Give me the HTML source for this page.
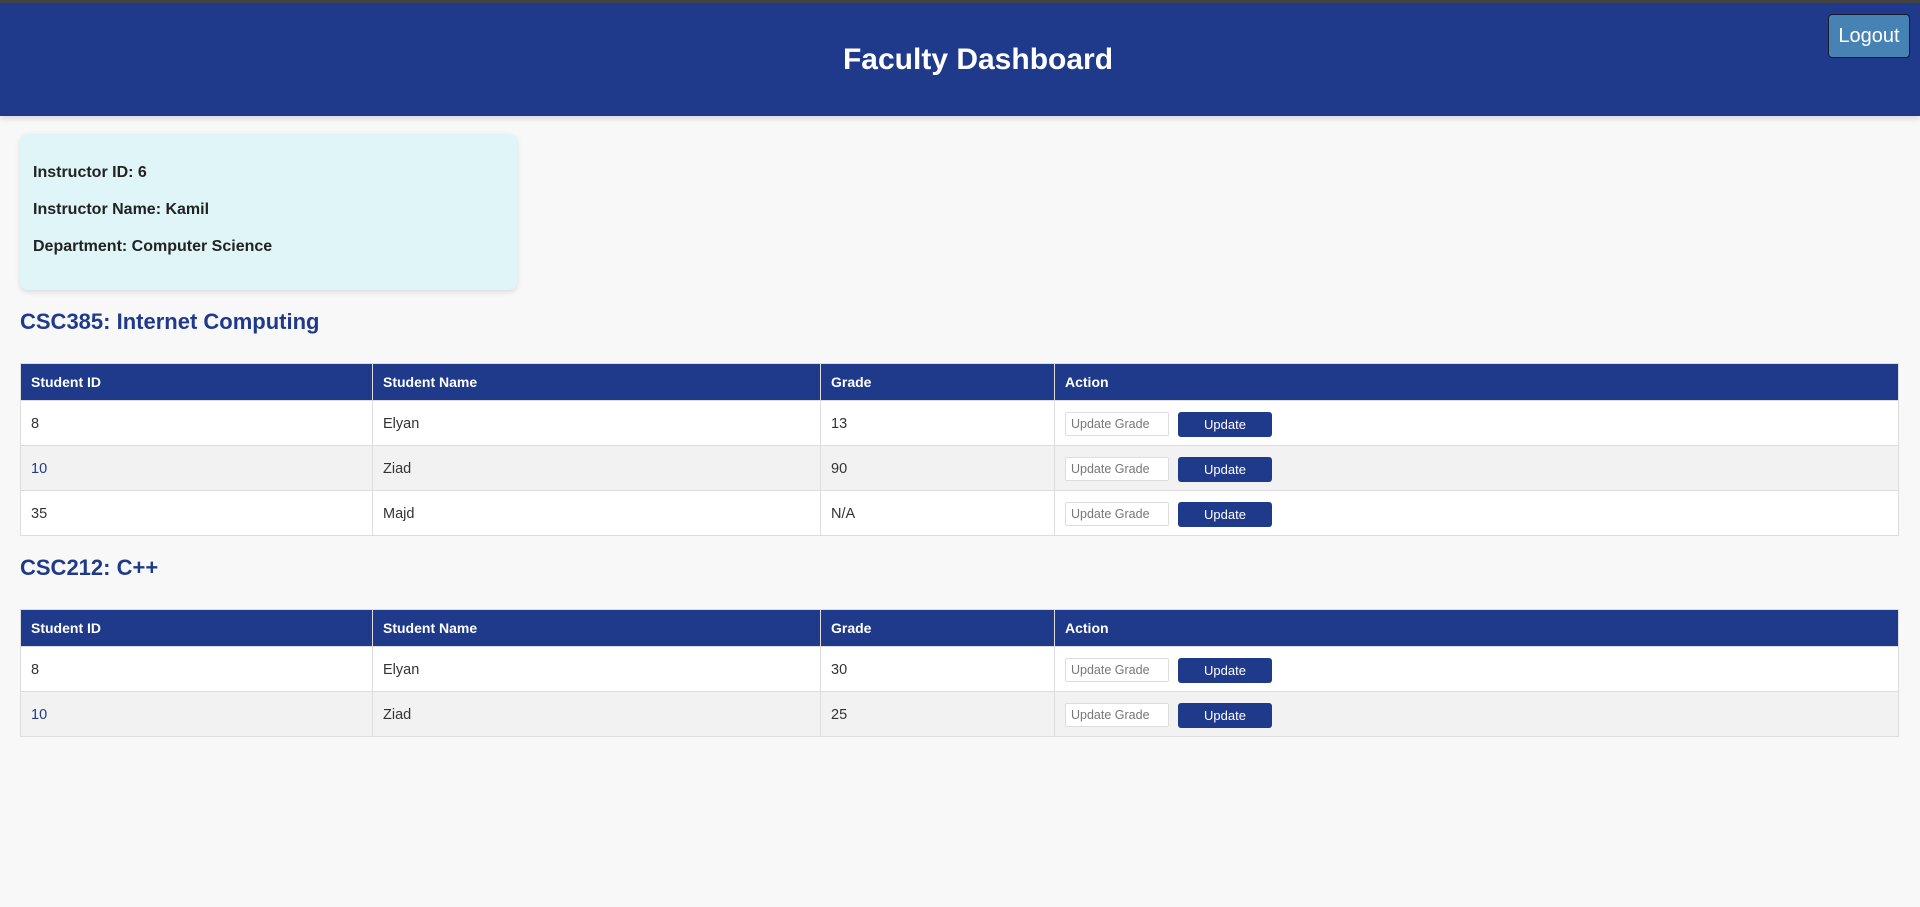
<!DOCTYPE html>
<html><head><meta charset="utf-8"><style>
*{box-sizing:border-box}
body{margin:0;background:#f8f8f8;font-family:"Liberation Sans",Arial,sans-serif;width:1920px;height:907px;overflow:hidden;position:relative}
.bar{position:absolute;top:0;left:0;width:1920px;height:3px;background:#444}
.hdr{position:absolute;top:3px;left:0;width:1920px;height:113px;background:#1f3a8a;box-shadow:0 2px 6px rgba(0,0,0,.15)}
.hdr h1{margin:0;position:absolute;left:36px;right:0;top:40px;text-align:center;color:#fff;font-size:30px;font-weight:bold}
.logout{position:absolute;left:1828px;top:11px;width:82px;height:44px;background:#4682b4;color:#fff;border:1px solid #1a1a2a;border-radius:4px;font-size:20px;line-height:42px;text-align:center}
.card{position:absolute;left:20px;top:134px;width:497px;height:156px;background:#dff5f8;border-radius:8px;box-shadow:0 2px 6px rgba(0,0,0,.12);padding:20px 13px;color:#222}
.card p{margin:0;font-size:16px;font-weight:bold;line-height:37px}
h2{position:absolute;left:20px;margin:0;color:#1f3a8a;font-size:22px;font-weight:bold}
table{position:absolute;left:20px;width:1879px;border-collapse:collapse;font-size:14.5px;color:#333}
th{background:#1f3a8a;color:#fff;text-align:left;font-weight:bold;height:37px;padding:0 10px;border:1px solid #ddd;font-size:14px}
td{height:45px;padding:2px 10px 0;border:1px solid #ddd;background:#fff}
tr:nth-child(odd) td{background:#f2f2f2}
td.n{color:#1f3a8a}
.in{display:inline-block;vertical-align:middle;width:104px;height:24px;border:1px solid #ddd;background:#fff;border-radius:2px;font-size:12.5px;color:#777;padding:4px 5px;line-height:15px}
.up{display:inline-block;vertical-align:middle;margin-left:9px;width:94px;height:25px;background:#1f3a8a;color:#fff;border-radius:3px;font-size:13px;text-align:center;line-height:25px}
</style></head><body>
<div class="bar"></div>
<div class="hdr"><h1>Faculty Dashboard</h1><div class="logout">Logout</div></div>
<div class="card"><p>Instructor ID: 6</p><p>Instructor Name: Kamil</p><p>Department: Computer Science</p></div>
<h2 style="top:309px">CSC385: Internet Computing</h2>
<table style="top:363px"><colgroup><col style="width:352px"><col style="width:448px"><col style="width:234px"><col></colgroup>
<tr><th>Student ID</th><th>Student Name</th><th>Grade</th><th>Action</th></tr>
<tr><td>8</td><td>Elyan</td><td>13</td><td><span class="in">Update Grade</span><span class="up">Update</span></td></tr>
<tr><td class="n">10</td><td>Ziad</td><td>90</td><td><span class="in">Update Grade</span><span class="up">Update</span></td></tr>
<tr><td>35</td><td>Majd</td><td>N/A</td><td><span class="in">Update Grade</span><span class="up">Update</span></td></tr>
</table>
<h2 style="top:555px">CSC212: C++</h2>
<table style="top:609px"><colgroup><col style="width:352px"><col style="width:448px"><col style="width:234px"><col></colgroup>
<tr><th>Student ID</th><th>Student Name</th><th>Grade</th><th>Action</th></tr>
<tr><td>8</td><td>Elyan</td><td>30</td><td><span class="in">Update Grade</span><span class="up">Update</span></td></tr>
<tr><td class="n">10</td><td>Ziad</td><td>25</td><td><span class="in">Update Grade</span><span class="up">Update</span></td></tr>
</table>
</body></html>
